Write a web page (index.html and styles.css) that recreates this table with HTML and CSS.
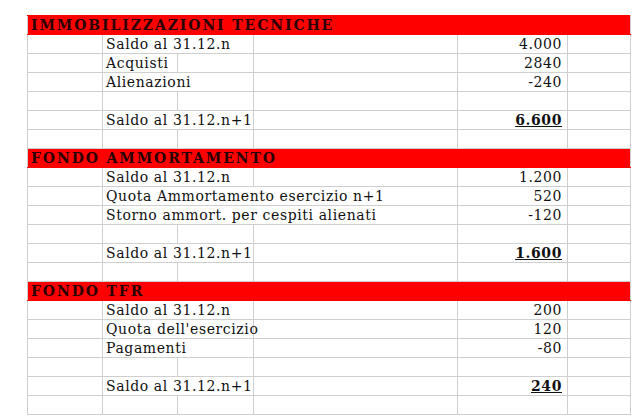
FILE: index.html
```html
<!DOCTYPE html>
<html lang="it">
<head>
<meta charset="utf-8">
<title>Immobilizzazioni</title>
<link rel="stylesheet" href="styles.css">
</head>
<body>
<table class="sheet">
  <colgroup>
    <col class="c-a"><col class="c-b"><col class="c-c"><col class="c-d"><col class="c-e"><col class="c-f">
  </colgroup>
  <tbody>
    <tr class="head"><td colspan="6">IMMOBILIZZAZIONI TECNICHE</td></tr>
    <tr><td></td><td colspan="2">Saldo al 31.12.n</td><td></td><td class="num">4.000</td><td></td></tr>
    <tr><td></td><td>Acquisti</td><td></td><td></td><td class="num">2840</td><td></td></tr>
    <tr><td></td><td colspan="2">Alienazioni</td><td></td><td class="num">-240</td><td></td></tr>
    <tr><td></td><td></td><td></td><td></td><td></td><td></td></tr>
    <tr><td></td><td colspan="2">Saldo al 31.12.n+1</td><td></td><td class="num total"><span>6.600</span></td><td></td></tr>
    <tr><td></td><td></td><td></td><td></td><td></td><td></td></tr>

    <tr class="head"><td colspan="6">FONDO AMMORTAMENTO</td></tr>
    <tr><td></td><td colspan="2">Saldo al 31.12.n</td><td></td><td class="num">1.200</td><td></td></tr>
    <tr><td></td><td colspan="3">Quota Ammortamento esercizio n+1</td><td class="num">520</td><td></td></tr>
    <tr><td></td><td colspan="3">Storno ammort. per cespiti alienati</td><td class="num">-120</td><td></td></tr>
    <tr><td></td><td></td><td></td><td></td><td></td><td></td></tr>
    <tr><td></td><td colspan="2">Saldo al 31.12.n+1</td><td></td><td class="num total"><span>1.600</span></td><td></td></tr>
    <tr><td></td><td></td><td></td><td></td><td></td><td></td></tr>

    <tr class="head"><td colspan="6">FONDO TFR</td></tr>
    <tr><td></td><td colspan="2">Saldo al 31.12.n</td><td></td><td class="num">200</td><td></td></tr>
    <tr><td></td><td colspan="2">Quota dell'esercizio</td><td></td><td class="num">120</td><td></td></tr>
    <tr><td></td><td colspan="2">Pagamenti</td><td></td><td class="num">-80</td><td></td></tr>
    <tr><td></td><td></td><td></td><td></td><td></td><td></td></tr>
    <tr><td></td><td colspan="2">Saldo al 31.12.n+1</td><td></td><td class="num total"><span>240</span></td><td></td></tr>
    <tr><td></td><td></td><td></td><td></td><td></td><td></td></tr>
  </tbody>
</table>
</body>
</html>
```
FILE: styles.css
```css
html, body {
  margin: 0;
  padding: 0;
  background: #ffffff;
}

body {
  padding: 15px 0 0 27px;
  font-family: "DejaVu Serif", "Liberation Serif", serif;
  color: #111111;
}

.sheet {
  border-collapse: collapse;
  table-layout: fixed;
  width: 603px;
  font-size: 14px;
  letter-spacing: 0.6px;
}

.c-a { width: 75px; }
.c-b { width: 75px; }
.c-c { width: 76px; }
.c-d { width: 204px; }
.c-e { width: 110px; }
.c-f { width: 63px; }

.sheet td {
  height: 18px;
  padding: 0 3px 1px 3px;
  border: 1px solid #cfcfcf;
  vertical-align: bottom;
  white-space: nowrap;
  overflow: visible;
  line-height: 16px;
  box-sizing: border-box;
}

.sheet tr {
  height: 19px;
}

.head td {
  background: #ff0000;
  border-color: #ff0000 #cfcfcf;
  color: #2a0000;
  font-weight: bold;
  letter-spacing: 1.9px;
}

.num {
  text-align: right;
}

.sheet td.num {
  padding-right: 5px;
}

.total span {
  font-weight: bold;
  text-decoration: underline;
}
```
